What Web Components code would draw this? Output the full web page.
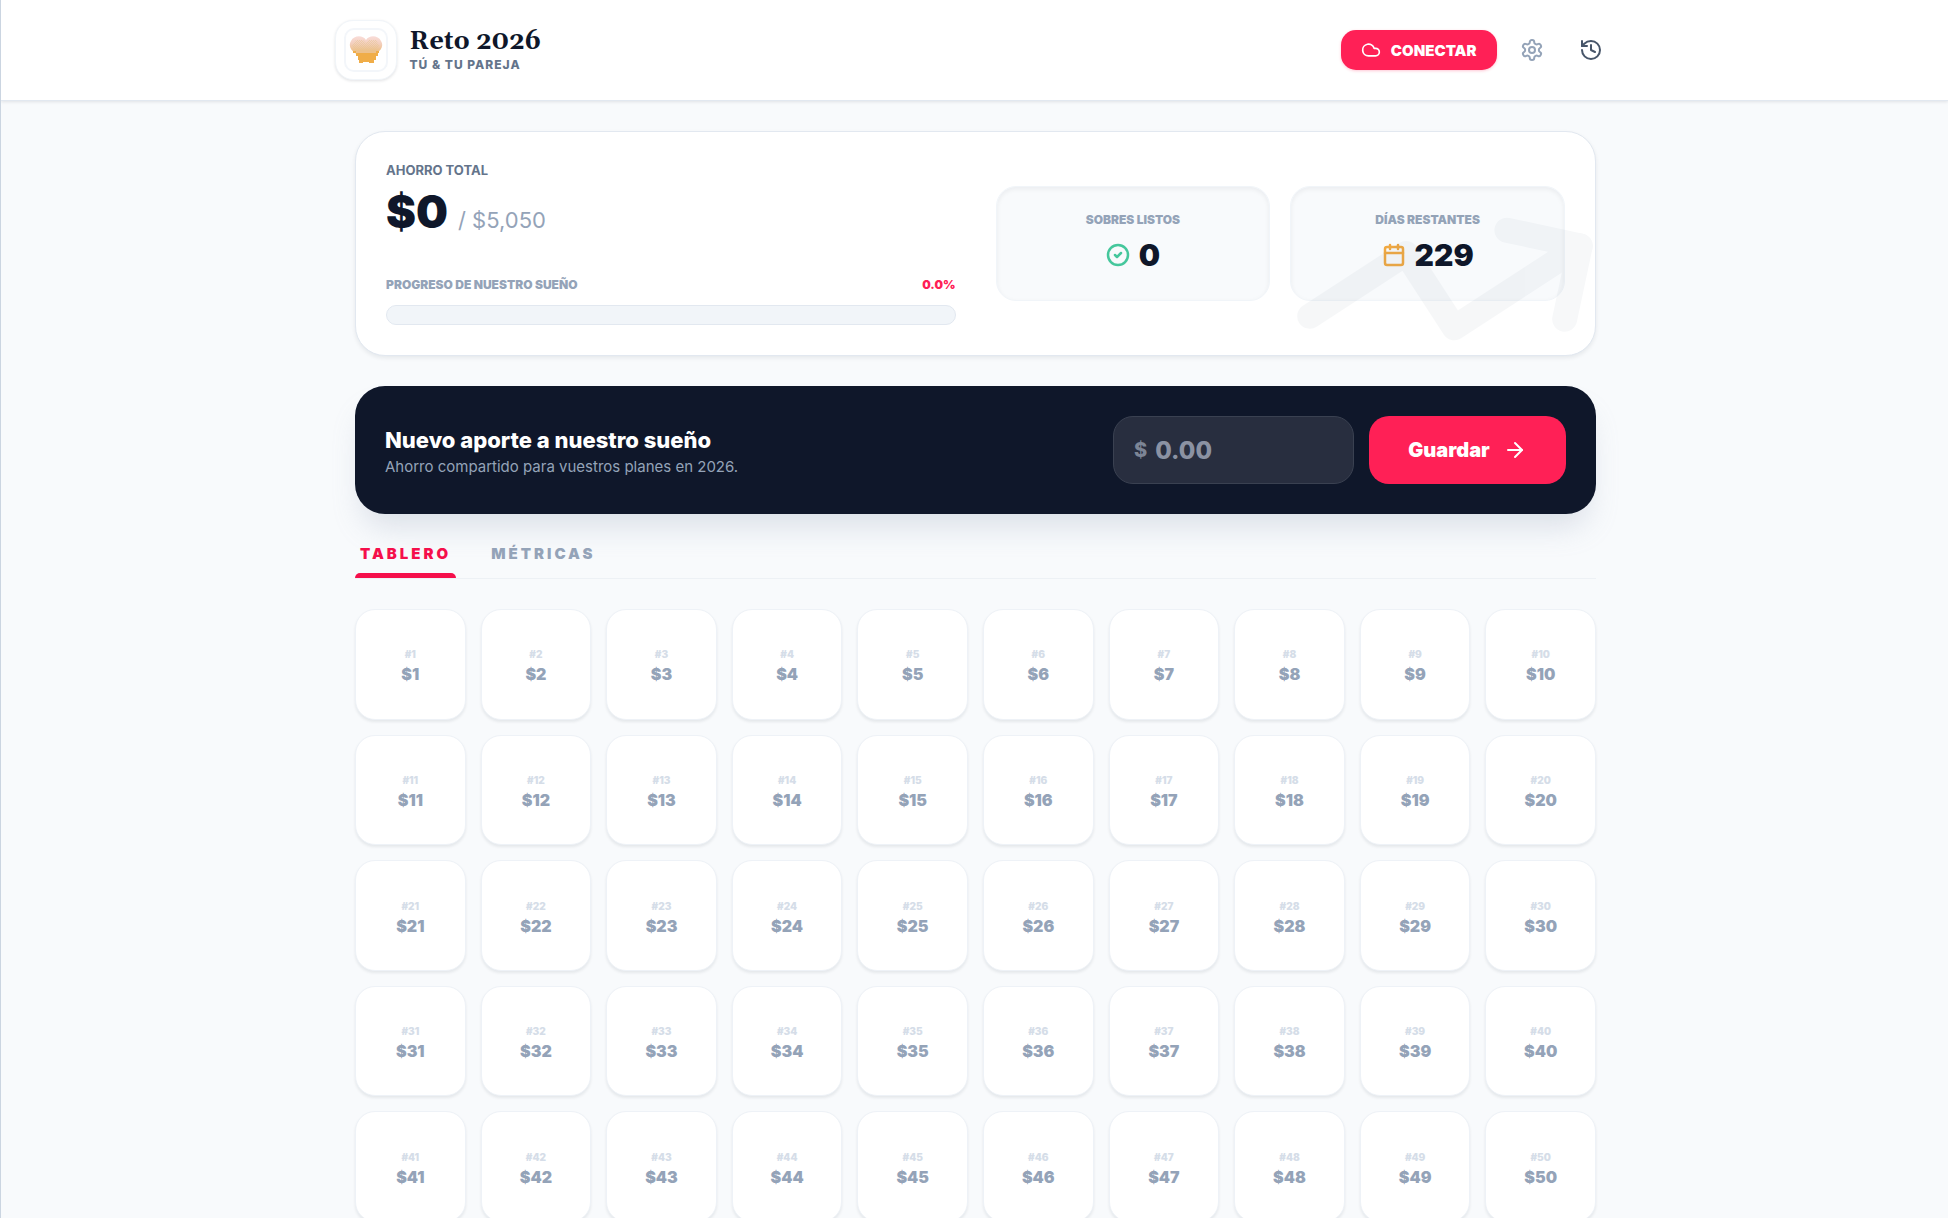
<!DOCTYPE html>
<html lang="es">
<head>
<meta charset="utf-8">
<title>Reto 2026</title>
<style>
html{height:100%;overflow:hidden}
body{margin:0;min-height:100%;box-sizing:border-box;border-left:1px solid #cbd5e1;background:#f8fafc;color:#0f172a;font-family:Inter,"Liberation Sans",sans-serif;font-size:15px}
main{display:flex;flex-direction:column;gap:30px;box-sizing:border-box;max-width:1281px;margin:0 auto;padding:30px 19px 30px 21px}
</style>
</head>
<body>
<reto-header></reto-header>
<main>
<savings-summary></savings-summary>
<contribution-form></contribution-form>
<board-tabs></board-tabs>
</main>
<script>
const define = (name, css, html, setup) => customElements.define(name, class extends HTMLElement {
  constructor() {
    super();
    this.attachShadow({mode: 'open'}).innerHTML =
      `<style>*{box-sizing:border-box;margin:0}:host{display:block;box-sizing:border-box}button{font:inherit;color:inherit;border:0;background:none;padding:0;cursor:pointer}${css}</style>${html}`;
    if (setup) setup(this.shadowRoot, this);
  }
});

const ICONS = {
  cloud: '<path d="M17.5 19H9a7 7 0 1 1 6.71-9h1.79a4.5 4.5 0 1 1 0 9Z"/>',
  gear: '<path d="M12.22 2h-.44a2 2 0 0 0-2 2v.18a2 2 0 0 1-1 1.73l-.43.25a2 2 0 0 1-2 0l-.15-.08a2 2 0 0 0-2.73.73l-.22.38a2 2 0 0 0 .73 2.73l.15.1a2 2 0 0 1 1 1.72v.51a2 2 0 0 1-1 1.74l-.15.09a2 2 0 0 0-.73 2.73l.22.38a2 2 0 0 0 2.73.73l.15-.08a2 2 0 0 1 2 0l.43.25a2 2 0 0 1 1 1.73V20a2 2 0 0 0 2 2h.44a2 2 0 0 0 2-2v-.18a2 2 0 0 1 1-1.73l.43-.25a2 2 0 0 1 2 0l.15.08a2 2 0 0 0 2.73-.73l.22-.39a2 2 0 0 0-.73-2.73l-.15-.08a2 2 0 0 1-1-1.74v-.5a2 2 0 0 1 1-1.74l.15-.09a2 2 0 0 0 .73-2.73l-.22-.38a2 2 0 0 0-2.73-.73l-.15.08a2 2 0 0 1-2 0l-.43-.25a2 2 0 0 1-1-1.73V4a2 2 0 0 0-2-2z"/><circle cx="12" cy="12" r="3"/>',
  history: '<path d="M3 12a9 9 0 1 0 9-9 9.75 9.75 0 0 0-6.74 2.74L3 8"/><path d="M3 3v5h5"/><path d="M12 7v5l4 2"/>',
  check: '<circle cx="12" cy="12" r="10"/><path d="m9 12 2 2 4-4"/>',
  calendar: '<path d="M8 2v4"/><path d="M16 2v4"/><rect width="18" height="18" x="3" y="4" rx="2"/><path d="M3 10h18"/>',
  arrow: '<path d="M5 12h14"/><path d="m12 5 7 7-7 7"/>',
  trend: '<path d="m22 7-8.5 8.5-5-5L2 17"/><path d="M16 7h6v6"/>'
};
define('line-icon', ':host{display:inline-flex;flex:none;width:20px;height:20px}svg{width:100%;height:100%;display:block}', '', (root, host) => {
  const w = host.getAttribute('weight') || 2;
  root.innerHTML += `<svg viewBox="0 0 24 24" fill="none" stroke="currentColor" stroke-width="${w}" stroke-linecap="round" stroke-linejoin="round" aria-hidden="true">${ICONS[host.getAttribute('name')]}</svg>`;
});

define('heart-logo', `
:host{width:62px;height:60px;flex:none;display:flex;align-items:center;justify-content:center;background:#fff;border:1px solid #f1f5f9;border-radius:18px;box-shadow:0 1px 3px #0f172a1f}
span{display:flex;align-items:center;justify-content:center;width:44px;height:44px;border:2px solid #f3f6fa;border-radius:10px}
svg{width:34px;height:28px}`, `
<span><svg viewBox="0 0 34 28" aria-hidden="true">
<defs><linearGradient id="g" x1="0" y1="0" x2="0" y2="1"><stop offset="0" stop-color="#f9dcd8"/><stop offset=".4" stop-color="#f3cfbd"/><stop offset=".75" stop-color="#edc18c"/></linearGradient>
<pattern id="d" width="2" height="2" patternUnits="userSpaceOnUse"><path d="M0 0h1v1H0zM1 1h1v1H1z" fill="#e6c58f"/></pattern></defs>
<path d="M17 4C14-1 5-1 2 5c-3 5 0 9 4 12l3 2h16l3-2c4-3 7-7 4-12C29-1 20-1 17 4z" fill="url(#g)"/>
<path d="M7 4h7l3 3 3-3h7l3 5-3 6H7L3 9z" fill="url(#d)" opacity=".55"/>
<path d="M4 15h3v2h20v-2h3v2h-1v3h-2v4h-2v3h-5v-1h-6v1h-4v-3H9v-4H7v-3H4z" fill="#f0ad48"/>
</svg></span>`);

define('reto-header', `
:host{background:#fff;border-bottom:1px solid #e2e8f0;box-shadow:0 1px 3px #0f172a1a}
header{display:flex;align-items:center;justify-content:space-between;max-width:1280px;margin:0 auto;padding:20px 0}
.brand{display:flex;align-items:center;gap:13px}
h1{font:700 25px/29px Georgia,Gelasio,"DejaVu Serif",serif}
p{font-size:12px;font-weight:800;line-height:16px;letter-spacing:1px;color:#64748b}
.actions{display:flex;align-items:center;gap:11px}
.connect{display:flex;align-items:center;gap:10px;height:40px;padding:0 20px;border-radius:15px;background:#ff2056;color:#fff;font-weight:900;font-size:15px;box-shadow:0 1px 3px #ff205640}
.tool{display:flex;align-items:center;justify-content:center;width:48px;height:48px;color:#94a3b8}
.tool line-icon{width:24px;height:24px}
.dark{color:#475569}`, `
<header><div class="brand"><heart-logo></heart-logo><div><h1>Reto 2026</h1><p>TÚ &amp; TU PAREJA</p></div></div>
<div class="actions"><button class="connect"><line-icon name="cloud"></line-icon>CONECTAR</button>
<button class="tool" aria-label="Ajustes"><line-icon name="gear"></line-icon></button>
<button class="tool dark" aria-label="Historial"><line-icon name="history"></line-icon></button></div></header>`);

define('stat-card', `
:host{flex:1;display:flex;flex-direction:column;align-items:center;gap:7px;padding:24px 20px;height:115px;background:#f8fafc;border:1px solid #f1f5f9;border-radius:20px;box-shadow:inset 0 2px 5px #0f172a0f}
h3{font-size:12px;font-weight:900;line-height:18px;color:#94a3b8}
div{display:flex;align-items:center;gap:9px;font-size:30px;font-weight:900;line-height:38px}
line-icon{width:24px;height:24px}`, `<h3><slot name="label"></slot></h3><div><line-icon></line-icon><slot></slot></div>`, (root, host) => {
  const old = root.querySelector('line-icon');
  const icon = document.createElement('template');
  icon.innerHTML = `<line-icon name="${host.getAttribute('icon')}" weight="2.5" style="color:${host.getAttribute('tint')}"></line-icon>`;
  old.replaceWith(document.importNode(icon.content, true));
});

define('savings-summary', `
:host{position:relative;overflow:hidden;background:#fff;border:1px solid #e2e8f0;border-radius:30px;box-shadow:0 2px 4px #0f172a14}
section{display:grid;grid-template-columns:1fr 1fr;gap:40px;align-items:center;padding:30px}
h2{font-size:13px;font-weight:700;line-height:16px;color:#64748b}
.total{display:flex;align-items:baseline;gap:10px;font-size:45px;font-weight:900;line-height:50px;margin-top:9px}
.total span{font-size:22px;font-weight:400;color:#94a3b8}
.row{display:flex;justify-content:space-between;margin-top:30px;font-size:12px;font-weight:900;line-height:20px;color:#94a3b8}
.row output{color:#ff2056}
.bar{height:20px;margin-top:10px;border:1px solid #e2e8f0;border-radius:10px;background:#f1f5f9}
.stats{display:flex;gap:20px}
.trend{position:absolute;right:0;bottom:-76px;width:300px;height:300px;transform:rotate(12deg);color:#334e68;opacity:.04;pointer-events:none}`, `
<section><div><h2>AHORRO TOTAL</h2><div class="total">$0 <span>/ $5,050</span></div>
<div class="row"><span id="p">PROGRESO DE NUESTRO SUEÑO</span><output>0.0%</output></div><div class="bar" role="progressbar" aria-labelledby="p" aria-valuenow="0"></div></div>
<div class="stats"><stat-card icon="check" tint="#45c79c"><span slot="label">SOBRES LISTOS</span>0</stat-card><stat-card icon="calendar" tint="#f0a944"><span slot="label">DÍAS RESTANTES</span>229</stat-card></div></section>
<line-icon class="trend" name="trend"></line-icon>`);

define('contribution-form', `
:host{background:#0f172a;color:#fff;border-radius:30px;box-shadow:0 20px 30px -8px #94a3b84d}
form{display:flex;align-items:center;justify-content:space-between;padding:30px}
h2{font-size:22px;font-weight:800;line-height:34px}
p{font-size:15px;line-height:20px;color:#94a3b8}
.controls{display:flex;gap:15px}
label{display:flex;align-items:center;gap:8px;width:241px;height:68px;padding:0 20px;border:1px solid #3a4151;border-radius:20px;background:#282e3f;color:#7c8596;font-size:20px;font-weight:800}
input{flex:1;min-width:0;border:0;padding:0;outline:0;background:none;color:#fff;font:800 24px Inter,sans-serif}
input::placeholder{color:#8b92a3;opacity:1}
button{display:flex;align-items:center;justify-content:center;gap:13px;width:197px;height:68px;border-radius:20px;background:#ff2056;font-size:20px;font-weight:900}
line-icon{width:24px;height:24px}`, `
<form><div><h2>Nuevo aporte a nuestro sueño</h2><p>Ahorro compartido para vuestros planes en 2026.</p></div>
<div class="controls"><label>$<input type="text" inputmode="decimal" placeholder="0.00" aria-label="Importe"></label><button type="button">Guardar<line-icon name="arrow"></line-icon></button></div></form>`);

define('envelope-cell', `
button{display:flex;flex-direction:column;align-items:center;justify-content:center;width:100%;aspect-ratio:1;background:#fff;border:1px solid #eef2f7;border-radius:20px;box-shadow:0 2px 3px #0f172a14;font-weight:900}
small{font-size:10px;line-height:20px;color:#d5dde8}
b{font-size:16px;font-weight:900;line-height:20px;color:#94a3b8}`, '', (root, host) => {
  const n = host.getAttribute('number');
  root.innerHTML += `<button><small>#${n}</small><b>$${n}</b></button>`;
});

define('board-tabs', `
nav{display:flex;gap:30px;border-bottom:1px solid #edf1f5}
nav button{padding:0 5px;height:34px;border-bottom:5px solid transparent;font-size:15px;font-weight:900;line-height:20px;letter-spacing:3px;color:#94a3b8;display:flex}
nav .on{color:#f50f4b;position:relative}
nav .on::after{content:"";position:absolute;left:0;right:0;bottom:-5px;height:5px;border-radius:5px 5px 0 0;background:#f50f4b}
.grid{display:grid;grid-template-columns:repeat(10,1fr);gap:15px;margin-top:30px}`, `
<nav role="tablist"><button class="on" role="tab" aria-selected="true">TABLERO</button><button role="tab" aria-selected="false">MÉTRICAS</button></nav>
<div class="grid">${Array.from({length: 50}, (_, i) => `<envelope-cell number="${i + 1}"></envelope-cell>`).join('')}</div>`);
</script>
</body>
</html>
